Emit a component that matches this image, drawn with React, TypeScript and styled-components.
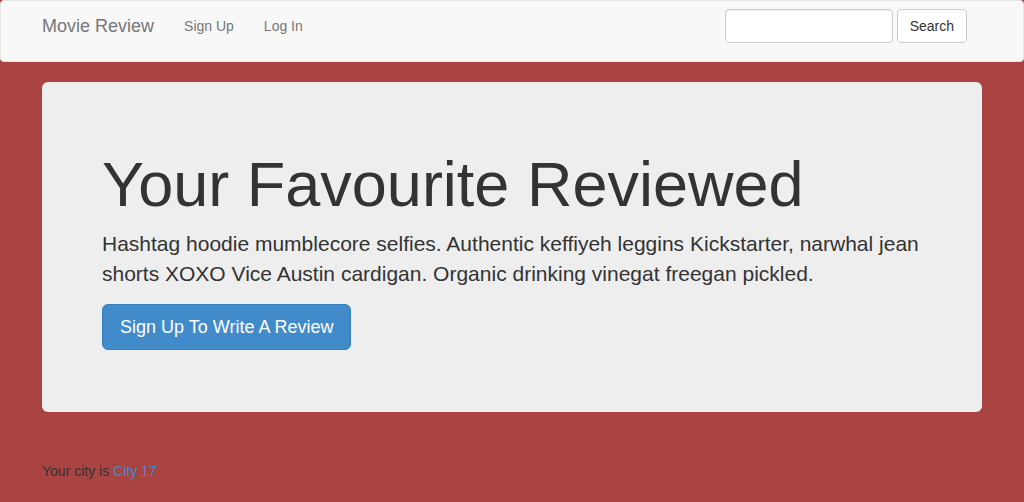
import React from 'react';
import styled, { createGlobalStyle } from 'styled-components';

const GlobalStyle = createGlobalStyle`
  html, body {
    margin: 0;
    padding: 0;
  }
  body {
    background: #a94442;
    font-family: "Liberation Sans", Arial, Helvetica, sans-serif;
    font-size: 14px;
    line-height: 1.428571;
    color: #333;
  }
  * {
    box-sizing: border-box;
  }
`;

const Navbar = styled.nav`
  background: #f8f8f8;
  border: 1px solid #e7e7e7;
  border-radius: 4px;
  margin-bottom: 20px;
  min-height: 62px;
`;

const Container = styled.div`
  width: 970px;
  margin: 0 auto;
  padding: 0 15px;
`;

const NavInner = styled(Container)`
  display: flex;
  align-items: flex-start;
  height: 50px;
`;

const Brand = styled.a`
  margin-left: -15px;
  padding: 15px;
  font-size: 18px;
  line-height: 20px;
  color: #777;
  text-decoration: none;
`;

const NavList = styled.ul`
  display: flex;
  list-style: none;
  margin: 0;
  padding: 0;
`;

const NavLink = styled.a`
  display: block;
  padding: 15px;
  line-height: 20px;
  color: #777;
  text-decoration: none;
`;

const SearchForm = styled.form`
  margin: 8px 15px 0 auto;
  display: flex;
  gap: 4px;
`;

const SearchInput = styled.input`
  width: 168px;
  height: 34px;
  padding: 6px 12px;
  font: inherit;
  border: 1px solid #ccc;
  border-radius: 4px;
  background: #fff;
  box-shadow: inset 0 1px 1px rgba(0, 0, 0, 0.075);
`;

const Button = styled.button<{ $size?: 'lg' }>`
  font-family: inherit;
  border-radius: ${(p) => (p.$size === 'lg' ? '6px' : '4px')};
  padding: ${(p) => (p.$size === 'lg' ? '10px 17px' : '6px 12px')};
  font-size: ${(p) => (p.$size === 'lg' ? '18px' : '14px')};
  line-height: ${(p) => (p.$size === 'lg' ? '24px' : '20px')};
  cursor: pointer;
`;

const DefaultButton = styled(Button)`
  background: #fff;
  border: 1px solid #ccc;
  color: #333;
`;

const PrimaryButton = styled(Button)`
  background: #428bca;
  border: 1px solid #357ebd;
  color: #fff;
`;

const Jumbotron = styled.div`
  background: #eee;
  border-radius: 6px;
  padding: 48px 60px 47px;
  margin-bottom: 30px;
`;

const Heading = styled.h1`
  font-size: 63px;
  font-weight: 500;
  line-height: 1.1;
  margin: 20px 0 10px;
  color: #333;
`;

const Lead = styled.p`
  font-size: 21px;
  font-weight: 200;
  line-height: 30px;
  margin: 0 0 15px;
`;

const Footer = styled.p`
  margin: 49px 0 0;
  line-height: 20px;
`;

const Link = styled.a`
  color: #428bca;
  text-decoration: none;
`;

export default function App() {
  return (
    <>
      <GlobalStyle />
      <Navbar>
        <NavInner>
          <Brand href="#">Movie Review</Brand>
          <NavList>
            <li>
              <NavLink href="#">Sign Up</NavLink>
            </li>
            <li>
              <NavLink href="#">Log In</NavLink>
            </li>
          </NavList>
          <SearchForm onSubmit={(e) => e.preventDefault()}>
            <SearchInput type="text" />
            <DefaultButton type="submit">Search</DefaultButton>
          </SearchForm>
        </NavInner>
      </Navbar>
      <Container>
        <Jumbotron>
          <Heading>Your Favourite Reviewed</Heading>
          <Lead>
            Hashtag hoodie mumblecore selfies. Authentic keffiyeh leggins Kickstarter, narwhal jean
            shorts XOXO Vice Austin cardigan. Organic drinking vinegat freegan pickled.
          </Lead>
          <Lead>
            <PrimaryButton $size="lg">Sign Up To Write A Review</PrimaryButton>
          </Lead>
        </Jumbotron>
        <Footer>
          Your city is <Link href="#">City 17</Link>
        </Footer>
      </Container>
    </>
  );
}
